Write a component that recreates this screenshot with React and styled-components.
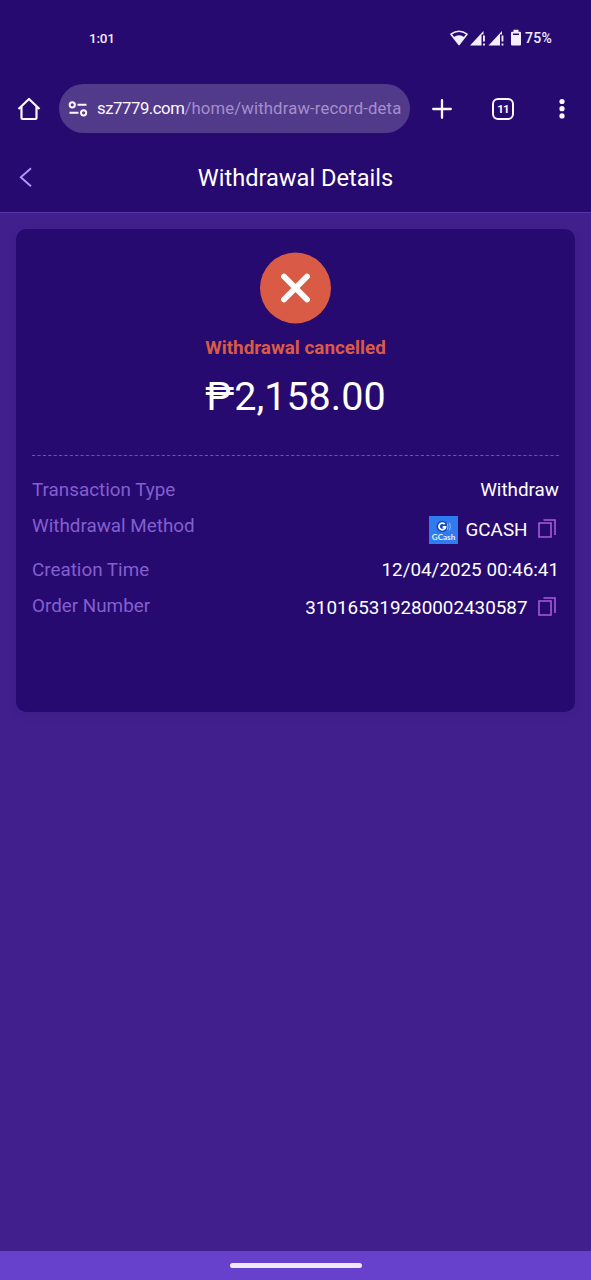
import React from 'react';
import styled, { createGlobalStyle } from 'styled-components';

const details = [
  { label: 'Transaction Type', value: 'Withdraw', height: 22 },
  { label: 'Withdrawal Method', value: 'GCASH', height: 29, logo: true, copy: true },
  { label: 'Creation Time', value: '12/04/2025 00:46:41', height: 22 },
  { label: 'Order Number', value: '310165319280002430587', height: 26, copy: true },
];

export default function App() {
  return (
    <Screen>
      <GlobalStyle />
      <StatusBar>
        <Clock>1:01</Clock>
        <StatusIcons />
        <Battery>75%</Battery>
      </StatusBar>
      <BrowserBar>
        <HomeIcon />
        <AddressBar>
          <SiteIcon />
          <Url>
            <Domain>sz7779.com</Domain>
            <Path>/home/withdraw-record-deta</Path>
          </Url>
        </AddressBar>
        <PlusIcon />
        <TabCount>11</TabCount>
        <MenuIcon />
      </BrowserBar>
      <Header>
        <BackIcon />
        <Title>Withdrawal Details</Title>
      </Header>
      <Content>
        <Card>
          <Summary>
            <CancelledIcon />
            <Status>Withdrawal cancelled</Status>
            <Amount>₱2,158.00</Amount>
          </Summary>
          <Divider width="527" height="1">
            <line x1="0" y1="0.5" x2="527" y2="0.5" stroke="#6f4bcb" strokeDasharray="3.2 2.2" />
          </Divider>
          <Details>
            {details.map(item => (
              <Row key={item.label} $height={item.height}>
                <Label>{item.label}</Label>
                <Value>
                  {item.logo && <GCashLogo />}
                  <span>{item.value}</span>
                  {item.copy && <CopyIcon />}
                </Value>
              </Row>
            ))}
          </Details>
        </Card>
      </Content>
      <NavigationBar>
        <Handle />
      </NavigationBar>
    </Screen>
  );
}

function StatusIcons() {
  return (
    <svg width="73" height="18" viewBox="0 0 73 18" fill="#f4ecff">
      <path d="M2 5.2Q10 -.8 18 5.2L10 15.500Z" fill="none" stroke="#f4ecff" strokeWidth="1.600" strokeLinejoin="round" />
      <path d="M4.500 8.200Q10 4.200 15.500 8.200L10 15.200Z" />
      <path d="M21 16.500L34.500 2v3.500h-2v11Z" />
      <path d="M34 6.500h1.900v6h-1.900zM34 14.500h1.900v2h-1.900z" />
      <path d="M39.500 16.500L53 2v3.500h-2v11Z" />
      <path d="M52.500 6.500h1.900v6h-1.900zM52.500 14.500h1.900v2h-1.900z" />
      <path d="M64.500 .8h5v2H71q1 0 1 1V15.500q0 1-1 1h-8q-1 0-1-1V3.800q0-1 1-1h1.500z" />
      <path d="M64 4.500h6V6h-6z" fill="#270a70" />
    </svg>
  );
}

function HomeIcon() {
  return (
    <Home width="24" height="24" viewBox="0 0 24 24">
      <path d="M1.500 12L12 2l10.500 10M4.500 9.500V21q0 1 1 1h13q1 0 1-1V9.500" fill="none" stroke="#fff7ff" strokeWidth="2.200" strokeLinejoin="round" />
    </Home>
  );
}

function SiteIcon() {
  return (
    <svg width="20" height="18" viewBox="0 0 20 18" fill="none" stroke="#fff7ff" strokeWidth="2">
      <circle cx="4.300" cy="4.800" r="2.600" />
      <path d="M9.500 4.800H18.500M1.500 12.800H10.500" />
      <circle cx="15.600" cy="12.800" r="2.600" />
    </svg>
  );
}

function PlusIcon() {
  return (
    <Plus width="20" height="20" viewBox="0 0 20 20">
      <path d="M10 1.200v17.600M1.200 10h17.600" stroke="#fff7ff" strokeWidth="2.300" strokeLinecap="round" />
    </Plus>
  );
}

function MenuIcon() {
  return (
    <Menu width="6" height="22" viewBox="0 0 6 22" fill="#fff7ff">
      <circle cx="3" cy="3.500" r="2.600" />
      <circle cx="3" cy="10.700" r="2.600" />
      <circle cx="3" cy="17.900" r="2.600" />
    </Menu>
  );
}

function BackIcon() {
  return (
    <svg width="14" height="20" viewBox="0 0 14 20">
      <path d="M12 1.200L1.800 10.200L12 19.200" fill="none" stroke="#b294ff" strokeWidth="1.900" />
    </svg>
  );
}

function CancelledIcon() {
  return (
    <svg width="72" height="72" viewBox="0 0 72 72">
      <circle cx="35.500" cy="36" r="35.500" fill="#da5b45" />
      <path d="M24 24.500l23 23M47 24.500l-23 23" stroke="#fff" strokeWidth="5.800" strokeLinecap="round" />
    </svg>
  );
}

function CopyIcon() {
  return (
    <Copy width="18" height="19" viewBox="0 0 18 19" fill="none" stroke="#a65cda" strokeWidth="1.600">
      <path d="M1 4h12v14H1z" />
      <path d="M5.500 1H17v15" />
    </Copy>
  );
}

function GCashLogo() {
  return (
    <Logo width="29" height="28" viewBox="0 0 29 28">
      <path d="M0 0h29v28H0z" fill="#307bf0" />
      <circle cx="13.200" cy="10.500" r="5.700" fill="#114bbd" />
      <path d="M15.700 8.200A3.300 3.300 0 1 0 16.500 11h-2.800" fill="none" stroke="#fff" strokeWidth="1.800" />
      <path d="M18.200 7.600q1.500 2.900 0 5.900M20.500 6.800q1.800 3.700 0 7.500" fill="none" stroke="#91c4ff" strokeWidth="1" />
      <text x="14.500" y="23.800" textAnchor="middle" textLength="23.500" lengthAdjust="spacingAndGlyphs">GCash</text>
    </Logo>
  );
}

const GlobalStyle = createGlobalStyle`
  body {
    margin: 0;
    background: #41208d;
  }

  * {
    box-sizing: border-box;
  }

  svg {
    display: block;
    flex-shrink: 0;
  }
`;

const Screen = styled.div`
  width: 591px;
  height: 1280px;
  display: flex;
  flex-direction: column;
  background: #41208d;
  color: #fff;
  font-family: Roboto, sans-serif;
`;

const StatusBar = styled.div`
  height: 76px;
  padding: 0 38px 0 89px;
  display: flex;
  align-items: center;
  background: #270a70;
  color: #f4ecff;
  font-size: 13.5px;
  font-weight: 500;
`;

const Clock = styled.span`
  flex: 1;
  letter-spacing: -0.2px;
`;

const Battery = styled.span`
  width: 28px;
  margin-left: 3px;
  font-size: 14px;
  letter-spacing: 0.3px;
`;

const BrowserBar = styled.div`
  height: 66px;
  padding: 0 26px 1px 17px;
  display: flex;
  align-items: center;
  background: #270a70;
`;

const Home = styled.svg`
  margin-right: 18px;
`;

const AddressBar = styled.div`
  width: 351px;
  height: 49px;
  padding: 0 9px;
  display: flex;
  align-items: center;
  border-radius: 25px;
  background: #523a8a;
`;

const Url = styled.div`
  margin-left: 9px;
  white-space: nowrap;
  font-size: 16.7px;
`;

const Domain = styled.span`
  color: #fff7ff;
  letter-spacing: -0.43px;
`;

const Path = styled.span`
  color: #a48fcc;
  letter-spacing: 0.15px;
`;

const Plus = styled.svg`
  margin-left: 22px;
`;

const TabCount = styled.div`
  width: 22px;
  height: 22px;
  margin-left: 40px;
  display: flex;
  align-items: center;
  justify-content: center;
  border: 2px solid #fff7ff;
  border-radius: 6px;
  color: #fff7ff;
  font-size: 11.5px;
  font-weight: 700;
  letter-spacing: -0.8px;
`;

const Menu = styled.svg`
  margin-left: auto;
`;

const Header = styled.div`
  height: 71px;
  padding: 0 18px 0 19px;
  display: flex;
  align-items: center;
  background: #270a70;
  border-bottom: 1px solid #5535a8;
`;

const Title = styled.h1`
  flex: 1;
  margin: 2px 15px 0 0;
  font-size: 23.6px;
  font-weight: 400;
  text-align: center;
`;

const Content = styled.main`
  flex: 1;
  padding: 16px;
`;

const Card = styled.section`
  height: 483px;
  padding: 23px 16px;
  border-radius: 10px;
  background: #270a70;
  box-shadow: 0 3px 9px rgba(38, 10, 110, 0.1);
`;

const Summary = styled.div`
  height: 203px;
  display: flex;
  flex-direction: column;
  align-items: center;
`;

const Status = styled.div`
  margin-top: 13px;
  line-height: 22px;
  color: #da5b45;
  font-size: 18.85px;
  font-weight: 700;
`;

const Amount = styled.div`
  margin-top: 13px;
  line-height: 50px;
  font-size: 39.5px;
`;

const Divider = styled.svg`
  width: 100%;
`;

const Details = styled.div`
  padding-top: 23px;
  display: flex;
  flex-direction: column;
  gap: 14.3px;
`;

const Row = styled.div`
  height: ${({ $height }) => $height}px;
  display: flex;
  justify-content: space-between;
  line-height: 22px;
  font-size: 18.83px;
`;

const Label = styled.span`
  color: #835fcf;
`;

const Value = styled.div`
  display: flex;
  align-items: center;
`;

const Logo = styled.svg`
  margin-right: 8px;

  text {
    fill: #e5efff;
    font: 700 7px Lato, sans-serif;
  }
`;

const Copy = styled.svg`
  margin: 0 3px 3px 10.5px;
`;

const NavigationBar = styled.div`
  height: 29px;
  padding-top: 12px;
  display: flex;
  justify-content: center;
  background: #6740cb;
`;

const Handle = styled.div`
  width: 132px;
  height: 5px;
  border-radius: 3px;
  background: #f2e5fe;
`;
